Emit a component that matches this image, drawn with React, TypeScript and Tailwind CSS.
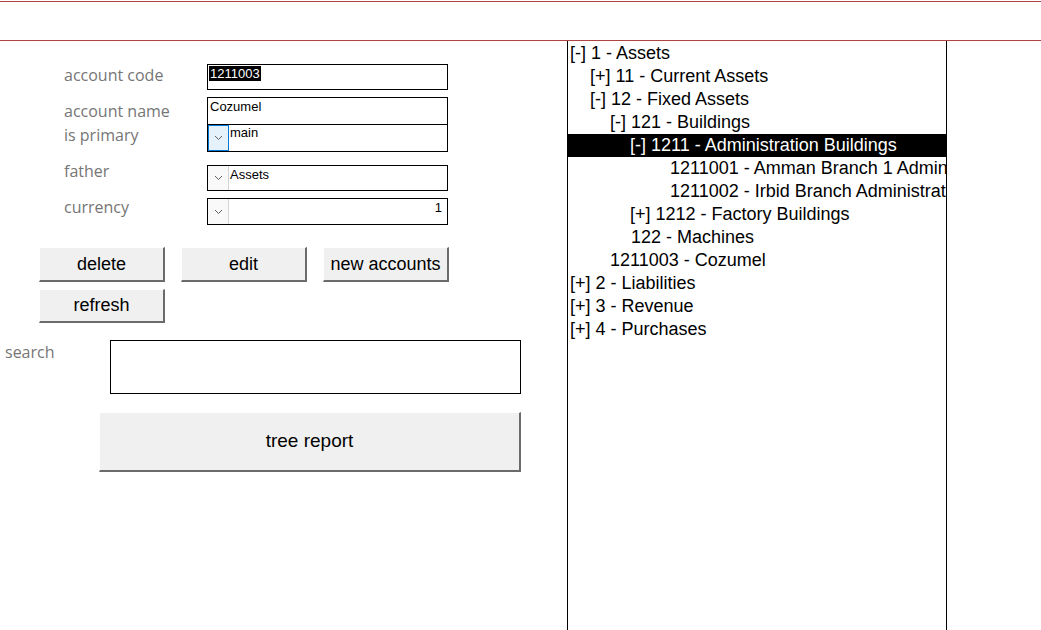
import { ReactNode } from 'react';

type TreeRow = {
    // indent from the panel's left edge, in px
    indent: string;
    label: string;
    selected?: boolean;
};

const treeRows: TreeRow[] = [
    { indent: 'pl-[2px]', label: '[-] 1 - Assets' },
    { indent: 'pl-[22px]', label: '[+] 11 - Current Assets' },
    { indent: 'pl-[22px]', label: '[-] 12 - Fixed Assets' },
    { indent: 'pl-[42px]', label: '[-] 121 - Buildings' },
    { indent: 'pl-[62px]', label: '[-] 1211 - Administration Buildings', selected: true },
    { indent: 'pl-[102px]', label: '1211001 - Amman Branch 1 Administration Building' },
    { indent: 'pl-[102px]', label: '1211002 - Irbid Branch Administration Building' },
    { indent: 'pl-[62px]', label: '[+] 1212 - Factory Buildings' },
    { indent: 'pl-[63px]', label: '122 - Machines' },
    { indent: 'pl-[42px]', label: '1211003 - Cozumel' },
    { indent: 'pl-[2px]', label: '[+] 2 - Liabilities' },
    { indent: 'pl-[2px]', label: '[+] 3 - Revenue' },
    { indent: 'pl-[2px]', label: '[+] 4 - Purchases' },
];

const Chevron = () => (
    <svg width="9" height="6" viewBox="0 0 9 6" fill="none">
        <polyline points="1,1 4.5,4.5 8,1" stroke="#606060" strokeWidth="1" />
    </svg>
);

const DropButton = ({ focused }: { focused?: boolean }) => (
    <div
        className={
            focused
                ? 'w-[21px] h-full shrink-0 flex items-center justify-center bg-[#e5f1fb] border border-[#0078d7]'
                : 'w-[21px] h-full shrink-0 flex items-center justify-center bg-[#f9f9f9] border-r border-[#d4d4d4]'
        }
    >
        <Chevron />
    </div>
);

const Button = ({ className, children }: { className: string; children: ReactNode }) => (
    <button
        className={`bg-[#f0f0f0] border-t border-l border-t-white border-l-white border-r-2 border-b-2 border-r-[#6b6b6b] border-b-[#6b6b6b] text-black font-['Liberation_Sans',Arial,sans-serif] ${className}`}
    >
        {children}
    </button>
);

const labelCls = "text-[16px] leading-[20px] text-[#767676] font-['Open_Sans',sans-serif]";
const inputText = "text-[13px] leading-[15px] text-black font-['Liberation_Sans',Arial,sans-serif]";

export default function App() {
    return (
        <div className="w-[1041px] h-[630px] bg-white overflow-hidden">
            <div className="h-px" />
            <div className="h-[40px] border-t border-b border-[#b04242]" />

            <div className="flex h-[589px]">
                {/* left form */}
                <div className="w-[567px] shrink-0">
                    <div className="flex">
                        <div className="w-[143px] ml-[64px] flex flex-col pt-[24px]">
                            <span className={labelCls}>account code</span>
                            <span className={`${labelCls} mt-[16px]`}>account name</span>
                            <span className={`${labelCls} mt-[4px]`}>is primary</span>
                            <span className={`${labelCls} mt-[16px]`}>father</span>
                            <span className={`${labelCls} mt-[16px]`}>currency</span>
                        </div>
                        <div className="w-[241px] flex flex-col pt-[23px]">
                            <div className="h-[26px] border border-black pl-px leading-[15px]">
                                <span className={`${inputText} bg-black text-white px-px`}>1211003</span>
                            </div>
                            <div className="h-[28px] mt-[7px] border border-black pl-[2px] leading-[15px]">
                                <span className={inputText}>Cozumel</span>
                            </div>
                            <div className="h-[27px] border border-t-0 border-black flex">
                                <DropButton focused />
                                <span className={`${inputText} pl-px`}>main</span>
                            </div>
                            <div className="h-[26px] mt-[13px] border border-black flex">
                                <DropButton />
                                <span className={`${inputText} pl-px pt-px`}>Assets</span>
                            </div>
                            <div className="h-[27px] mt-[7px] border border-black flex">
                                <DropButton />
                                <span className={`${inputText} flex-1 text-right pr-[5px] pt-px`}>1</span>
                            </div>
                        </div>
                    </div>

                    <div className="flex gap-[16px] ml-[39px] mt-[22px]">
                        <Button className="w-[126px] h-[35px] text-[18px]">delete</Button>
                        <Button className="w-[126px] h-[35px] text-[18px]">edit</Button>
                        <Button className="w-[126px] h-[35px] text-[18px]">new accounts</Button>
                    </div>
                    <div className="ml-[39px] mt-[7px]">
                        <Button className="w-[126px] h-[34px] text-[18px]">refresh</Button>
                    </div>

                    <div className="flex mt-[17px]">
                        <span className={`${labelCls} w-[110px] pl-[5px] pt-[2px]`}>search</span>
                        <div className="w-[411px] h-[54px] border border-black" />
                    </div>
                    <div className="ml-[99px] mt-[18px]">
                        <Button className="w-[422px] h-[60px] text-[19px]">tree report</Button>
                    </div>
                </div>

                {/* account tree */}
                <div className="w-[380px] shrink-0 h-full pt-px border-l border-r border-black overflow-hidden">
                    {treeRows.map(row => (
                        <div
                            key={row.label}
                            className={`h-[23px] leading-[23px] whitespace-nowrap overflow-hidden text-[18px] font-['Liberation_Sans',Arial,sans-serif] ${row.indent} ${row.selected ? 'bg-black text-white' : 'text-black'}`}
                        >
                            {row.label}
                        </div>
                    ))}
                </div>
            </div>
        </div>
    );
}
